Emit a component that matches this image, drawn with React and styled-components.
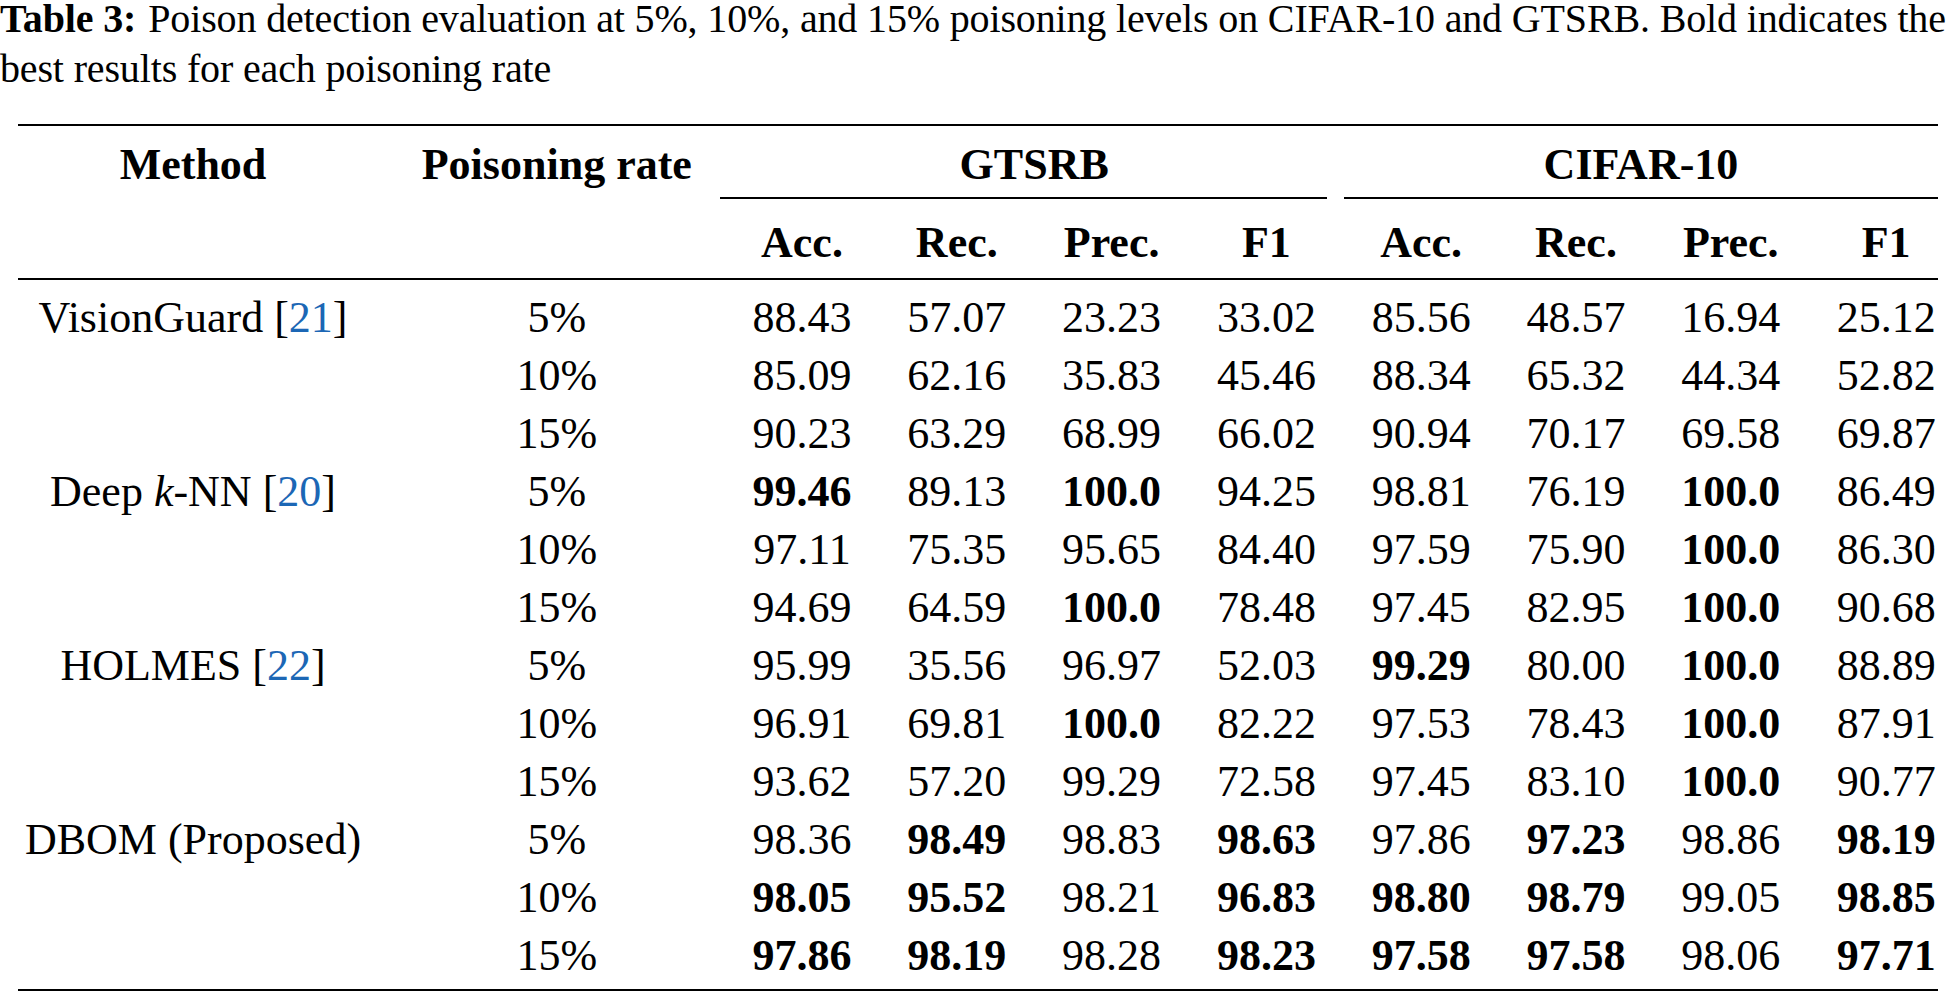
import React from 'react';
import styled, { createGlobalStyle } from 'styled-components';

const GlobalStyle = createGlobalStyle`
  html, body {
    margin: 0;
    padding: 0;
    background: #fff;
    overflow: hidden;
  }
  body {
    font-family: "Liberation Serif", "Times New Roman", serif;
    color: #000;
  }
`;

const Page = styled.div`
  width: 1955px;
  height: 994px;
  box-sizing: border-box;
`;

/* small strut font keeps the 50px line pitch while lifting the baseline */
const Caption = styled.p`
  margin: 0;
  font-size: 20.7px;
  line-height: 50px;
`;

const CaptionText = styled.span`
  font-size: 40px;
  line-height: 0;
  letter-spacing: -0.15px;
`;

const CaptionLabel = styled(CaptionText)`
  font-weight: 700;
  margin-right: 12px;
`;

const Table = styled.div`
  margin: 24px 0 0 18px;
  width: 1920px;
`;

const Rule = styled.div`
  height: ${(p) => p.$h || 2}px;
  background: #000;
`;

const Row = styled.div`
  display: grid;
  grid-template-columns: 350px 356.6px repeat(7, 154.8px) 130px;
  align-items: start;
  font-size: 44px;
  line-height: 58px;
  padding-top: ${(p) => p.$top || 0}px;
  padding-bottom: ${(p) => p.$bottom || 0}px;
`;

const Cell = styled.div`
  text-align: center;
  white-space: nowrap;
  font-weight: ${(p) => (p.$bold ? 700 : 400)};
  padding-left: ${(p) => p.$shift || 0}px;
`;

const Group = styled.div`
  grid-column: span 4;
  text-align: center;
  font-weight: 700;
`;

const CmidRule = styled.div`
  height: 1.5px;
  background: #000;
  margin: 3px ${(p) => p.$trimRight || 0}px 0 ${(p) => p.$trimLeft || 0}px;
`;

const Body = styled.div`
  padding: 9px 0 4px;
`;

const Cite = styled.span`
  color: #1c67b5;
`;

const metrics = ['Acc.', 'Rec.', 'Prec.', 'F1', 'Acc.', 'Rec.', 'Prec.', 'F1'];

const methods = [
  {
    name: 'VisionGuard',
    ref: '21',
    rows: [
      ['5%', '88.43 57.07 23.23 33.02 85.56 48.57 16.94 25.12'],
      ['10%', '85.09 62.16 35.83 45.46 88.34 65.32 44.34 52.82'],
      ['15%', '90.23 63.29 68.99 66.02 90.94 70.17 69.58 69.87'],
    ],
  },
  {
    name: 'Deep',
    italic: 'k',
    suffix: '-NN',
    ref: '20',
    rows: [
      ['5%', '*99.46 89.13 *100.0 94.25 98.81 76.19 *100.0 86.49'],
      ['10%', '97.11 75.35 95.65 84.40 97.59 75.90 *100.0 86.30'],
      ['15%', '94.69 64.59 *100.0 78.48 97.45 82.95 *100.0 90.68'],
    ],
  },
  {
    name: 'HOLMES',
    ref: '22',
    rows: [
      ['5%', '95.99 35.56 96.97 52.03 *99.29 80.00 *100.0 88.89'],
      ['10%', '96.91 69.81 *100.0 82.22 97.53 78.43 *100.0 87.91'],
      ['15%', '93.62 57.20 99.29 72.58 97.45 83.10 *100.0 90.77'],
    ],
  },
  {
    name: 'DBOM (Proposed)',
    rows: [
      ['5%', '98.36 *98.49 98.83 *98.63 97.86 *97.23 98.86 *98.19'],
      ['10%', '*98.05 *95.52 98.21 *96.83 *98.80 *98.79 99.05 *98.85'],
      ['15%', '*97.86 *98.19 98.28 *98.23 *97.58 *97.58 98.06 *97.71'],
    ],
  },
];

function MethodName({ m }) {
  return (
    <>
      {m.name}
      {m.italic && (
        <>
          {' '}
          <i>{m.italic}</i>
          {m.suffix}
        </>
      )}
      {m.ref && (
        <>
          {' '}[<Cite>{m.ref}</Cite>]
        </>
      )}
    </>
  );
}

export default function App() {
  return (
    <Page>
      <GlobalStyle />
      <Caption>
        <CaptionLabel>Table 3:</CaptionLabel>
        <CaptionText>
          Poison detection evaluation at 5%, 10%, and 15% poisoning levels on
          CIFAR-10 and GTSRB. Bold indicates the best results for each
          poisoning rate
        </CaptionText>
      </Caption>
      <Table>
        <Rule />
        <Row $top={10}>
          <Cell $bold>Method</Cell>
          <Cell $bold $shift={21}>Poisoning rate</Cell>
          <Group>
            GTSRB
            <CmidRule $trimLeft={-5} $trimRight={17} />
          </Group>
          <Group>
            CIFAR-10
            <CmidRule />
          </Group>
        </Row>
        <Row $top={15} $bottom={6}>
          <Cell />
          <Cell />
          {metrics.map((t, i) => (
            <Cell key={i} $bold $shift={i === 7 ? 26 : 0}>
              {t}
            </Cell>
          ))}
        </Row>
        <Rule />
        <Body>
          {methods.map((m) =>
            m.rows.map(([rate, vals], ri) => (
              <Row key={m.name + rate}>
                <Cell>{ri === 0 ? <MethodName m={m} /> : null}</Cell>
                <Cell $shift={21}>{rate}</Cell>
                {vals.split(' ').map((v, i) => (
                  <Cell key={i} $bold={v[0] === '*'} $shift={i === 7 ? 26 : 0}>
                    {v.replace('*', '')}
                  </Cell>
                ))}
              </Row>
            ))
          )}
        </Body>
        <Rule />
      </Table>
    </Page>
  );
}
